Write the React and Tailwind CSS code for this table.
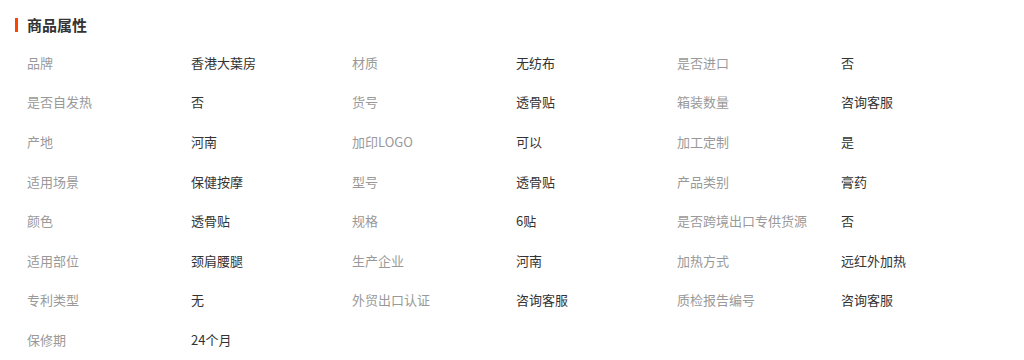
import React from "react";

const rows = [
  ["品牌", "香港大葉房", "材质", "无纺布", "是否进口", "否"],
  ["是否自发热", "否", "货号", "透骨贴", "箱装数量", "咨询客服"],
  ["产地", "河南", "加印LOGO", "可以", "加工定制", "是"],
  ["适用场景", "保健按摩", "型号", "透骨贴", "产品类别", "膏药"],
  ["颜色", "透骨贴", "规格", "6贴", "是否跨境出口专供货源", "否"],
  ["适用部位", "颈肩腰腿", "生产企业", "河南", "加热方式", "远红外加热"],
  ["专利类型", "无", "外贸出口认证", "咨询客服", "质检报告编号", "咨询客服"],
  ["保修期", "24个月"],
];

export default function App() {
  return (
    <div
      className="w-[1024px] h-[360px] bg-white overflow-hidden"
      style={{ fontFamily: '"Noto Sans CJK SC", "Noto Sans", sans-serif' }}
    >
      <div className="pt-[15px] pl-[15px] flex items-center h-[35px]">
        <div className="w-[3px] h-[14px] bg-[#ff4400]" />
        <div className="ml-[9px] text-[15px] font-bold text-[#333333] leading-[20px]">
          商品属性
        </div>
      </div>
      <div className="mt-[8px] pl-[27px]">
        {rows.map((r, i) => (
          <div key={i} className="flex h-[39.6px] items-center text-[13px] leading-[20px]">
            {[0, 1, 2].map((c) =>
              r[c * 2] !== undefined ? (
                <div key={c} className="flex">
                  <div className="w-[164px] text-[#999999] whitespace-nowrap">{r[c * 2]}</div>
                  <div className="w-[161px] text-[#333333] whitespace-nowrap">{r[c * 2 + 1]}</div>
                </div>
              ) : null
            )}
          </div>
        ))}
      </div>
    </div>
  );
}
